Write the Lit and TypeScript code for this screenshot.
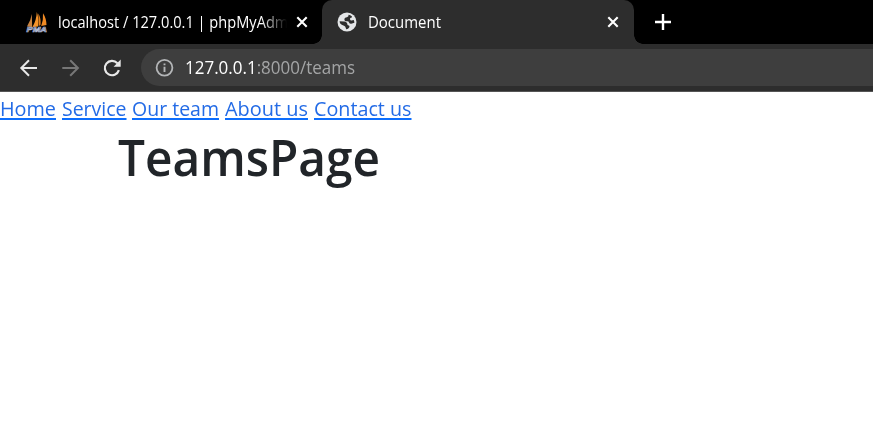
import { LitElement, html, css, svg } from "lit";
import { customElement, property } from "lit/decorators.js";

/** A line of text condensed or widened to an exact advance width. */
@customElement("fit-text")
class FitText extends LitElement {
  @property({ type: Number }) width = 0;

  static styles = css`
    :host { display: block; flex: none; white-space: nowrap; }
    .run { display: inline-block; transform-origin: 0 50%; text-decoration: inherit; }
  `;

  firstUpdated() {
    const run = this.renderRoot.querySelector(".run") as HTMLElement;
    const natural = run.getBoundingClientRect().width;
    this.style.width = `${this.width}px`;
    run.style.transform = `scaleX(${this.width / natural})`;
  }

  render() {
    return html`<span class="run"><slot></slot></span>`;
  }
}

const closeIcon = html`<svg class="close" width="12" height="12" viewBox="0 0 12 12">
  <path d="M1.3 1.3L10.7 10.7M10.7 1.3L1.3 10.7" stroke="#fff" stroke-width="2.1" fill="none" />
</svg>`;

const sailsIcon = html`<svg class="favicon" width="22" height="22" viewBox="0 0 22 22">
  <path d="M5.800 3Q5 9 1 15.500L6.200 16z" fill="#c98340" />
  <path d="M10.800 1Q10.500 9 6.500 16L12.200 15.500Q13 7 10.800 1z" fill="#f5942a" />
  <path d="M12.300 2.500Q15.200 7 14.500 14L12.800 15z" fill="#e07f1e" />
  <path d="M17 2.200Q17.500 9 15.200 15L20.500 14Q20.300 7 17 2.200z" fill="#f08a24" />
  <text x="0.500" y="20.700" class="pma" textLength="20.500" lengthAdjust="spacingAndGlyphs">PMA</text>
</svg>`;

const globeIcon = html`<svg class="favicon" width="20" height="20" viewBox="0 0 20 20">
  <circle cx="10" cy="10" r="9.500" fill="#e4e6e8" />
  <path d="M11.500 2.800Q12 4.600 10 5.200Q7.200 5.600 7.400 7.700Q7.700 9.400 9.600 9.200Q12 9 12 10.500Q12.400 11.900 14.200 11.800L17.400 10.700Q17.300 9.300 16.700 8L14.600 8.500Q13.200 8.600 13 7.200Q12.600 6 14.800 5.600L15 4.600Q13.200 3.100 11.500 2.800z" fill="#2d2d2d" />
  <path d="M2.600 9.200L7.200 9.600Q10.300 10 10.400 12.400Q10.600 13.400 12 13.600Q12.900 14 12.200 15.500Q11.200 17.400 9.200 17.300L8.600 15.500Q8.500 14.300 7 13.700Q4.500 13 3 11.300z" fill="#2d2d2d" />
</svg>`;

const arrow = (color: string, back: boolean) => html`<svg class="nav-icon" width="18" height="18" viewBox="0 0 18 18">
  ${back
    ? svg`<path d="M17 9H2M9 1.300L1.300 9L9 16.700" fill="none" stroke=${color} stroke-width="2" />`
    : svg`<path d="M0.300 9H15.500M8.200 1.300L15.900 9L8.200 16.700" fill="none" stroke=${color} stroke-width="2" />`}
</svg>`;

const reloadIcon = html`<svg class="nav-icon reload" width="18" height="18" viewBox="0 0 18 18">
  <path d="M15.900 11.200A7.200 7.200 0 1 1 14.400 4.200" fill="none" stroke="#e8e8e8" stroke-width="2.200" />
  <path d="M17.700 0.600V7.700H10.600z" fill="#e8e8e8" />
</svg>`;

const infoIcon = html`<svg class="info" width="18" height="18" viewBox="0 0 18 18">
  <circle cx="8.500" cy="8.700" r="7.900" fill="none" stroke="#b4b6b8" stroke-width="1.800" />
  <path d="M8.500 7.700V13M8.500 4.400V6.300" stroke="#b4b6b8" stroke-width="1.900" fill="none" />
</svg>`;

const links = [
  { label: "Home", width: 56 },
  { label: "Service", width: 64.5 },
  { label: "Our team", width: 87 },
  { label: "About us", width: 83 },
  { label: "Contact us", width: 97.5 },
];

@customElement("app-root")
class AppRoot extends LitElement {
  static styles = css`
    :host { display: block; height: 436px; overflow: hidden; background: #fff; font-family: "Open Sans", "Noto Sans", sans-serif; }
    svg { display: block; flex: none; overflow: visible; }
    .tabs { display: flex; height: 44px; background: #000; color: #fff; font-size: 15.5px; }
    .tab { display: flex; align-items: center; box-sizing: border-box; height: 44px; }
    .tab.idle { width: 322px; padding-left: 26px; }
    .tab.active { position: relative; width: 312px; padding-left: 15px; background: #2d2d2d; border-radius: 10px 10px 0 0; }
    .tab.active::before, .tab.active::after { content: ""; position: absolute; bottom: 0; width: 9px; height: 9px; }
    .tab.active::before { right: 100%; background: radial-gradient(circle at 0 0, transparent 8.500px, #2d2d2d 9px); }
    .tab.active::after { left: 100%; background: radial-gradient(circle at 100% 0, transparent 8.500px, #2d2d2d 9px); }
    .title { overflow: hidden; line-height: 22px; }
    .idle .title { width: 229.500px; margin-left: 9.500px; mask-image: linear-gradient(90deg, #000 203px, transparent 229px); }
    .active .title { width: 233px; margin-left: 11px; }
    .idle .close { margin-left: 9px; }
    .active .close { margin-left: 6px; }
    .plus { margin: 14px 0 0 21px; }
    .pma { font: italic 700 8px "Liberation Sans", sans-serif; fill: #1c2548; stroke: #b4bcd6; stroke-width: 0.700px; }
    .toolbar { display: flex; align-items: center; box-sizing: border-box; height: 48px; padding-left: 20px; background: #2d2d2d; border-bottom: 1px solid #555; }
    .nav-icon { margin-right: 24px; }
    .nav-icon.reload { margin: 0 25px 0 -1px; }
    .omnibox { display: flex; align-items: center; flex: 1; height: 37px; margin-left: -5px; padding-left: 15px; background: #3e3e3e; border-radius: 18.500px 0 0 18.500px; font-size: 17.500px; color: #a4a5a6; }
    .url { margin: -1px 0 0 11px; line-height: 24px; }
    .host { color: #fff; }
    .links { display: flex; gap: 5.800px; height: 33px; line-height: 32px; font-size: 20.500px; }
    .link { color: #236be6; }
    .link u { text-decoration: underline #0d6efd; text-decoration-thickness: 2px; text-underline-offset: 2px; text-decoration-skip-ink: none; }
    .heading { margin: 1.500px 0 0 117.500px; font-size: 50px; line-height: 60px; font-weight: 600; color: #212529; }
  `;

  render() {
    return html`
      <div class="tabs">
        <div class="tab idle">
          ${sailsIcon}
          <div class="title"><fit-text .width=${243}>localhost / 127.0.0.1 | phpMyAdmin</fit-text></div>
          ${closeIcon}
        </div>
        <div class="tab active">
          ${globeIcon}
          <div class="title"><fit-text .width=${73}>Document</fit-text></div>
          ${closeIcon}
        </div>
        <svg class="plus" width="16" height="16" viewBox="0 0 16 16">
          <path d="M8 0V16M0 8H16" stroke="#fff" stroke-width="2.400" />
        </svg>
      </div>
      <div class="toolbar">
        ${arrow("#e8e8e8", true)}${arrow("#777", false)}${reloadIcon}
        <div class="omnibox">
          ${infoIcon}
          <fit-text class="url" .width=${170}><span class="host">127.0.0.1</span>:8000/teams</fit-text>
        </div>
      </div>
      <nav class="links">
        ${links.map((l) => html`<fit-text class="link" .width=${l.width}><u>${l.label}</u></fit-text>`)}
      </nav>
      <h1 class="heading"><fit-text .width=${262}>TeamsPage</fit-text></h1>
    `;
  }
}
